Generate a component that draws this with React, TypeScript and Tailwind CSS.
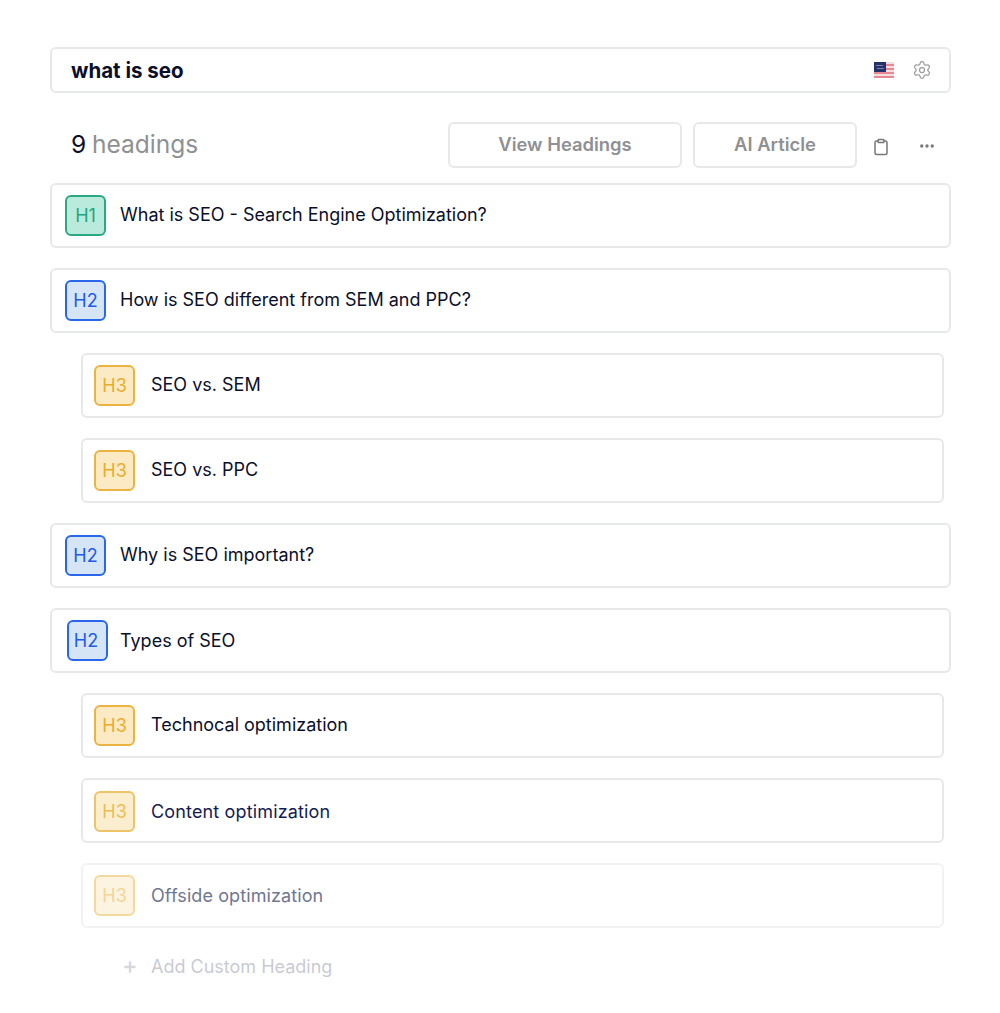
import React from 'react';
import { Settings, Clipboard, MoreHorizontal, Plus } from 'lucide-react';

type Level = 'H1' | 'H2' | 'H3';

interface HeadingRow {
  level: Level;
  title: string;
  badgeClass?: string;
  rowClass?: string;
  textClass?: string;
}

const badgeStyles: Record<Level, string> = {
  H1: 'bg-[#b9eadb] border-[#2aa883] text-[#1ea67f]',
  H2: 'bg-[#d5e5f5] border-[#2a66ea] text-[#1d5be8]',
  H3: 'bg-[#fbeac4] border-[#ebb440] text-[#e8ac2e]',
};

const rows: HeadingRow[] = [
  { level: 'H1', title: 'What is SEO - Search Engine Optimization?' },
  { level: 'H2', title: 'How is SEO different from SEM and PPC?' },
  { level: 'H3', title: 'SEO vs. SEM' },
  { level: 'H3', title: 'SEO vs. PPC' },
  { level: 'H2', title: 'Why is SEO important?' },
  { level: 'H2', title: 'Types of SEO', badgeClass: 'ml-[2px] mr-[12px] pr-[3px]', textClass: 'text-[#0b0f2b]' },
  { level: 'H3', title: 'Technocal optimization' },
  {
    level: 'H3',
    title: 'Content optimization',
    badgeClass: 'mr-[16px] mt-[2px] opacity-80',
    textClass: 'mt-[2px] tracking-[0.15px] text-[#161b52]',
  },
  {
    level: 'H3',
    title: 'Offside optimization',
    rowClass: 'border-[#f1f2f3]',
    badgeClass: 'mr-[16px] opacity-50',
    textClass: 'tracking-[0.1px] text-[#6f7792]',
  },
];

const Row: React.FC<{ row: HeadingRow }> = ({ row }) => {
  const nested = row.level === 'H3';
  return (
    <div
      className={`flex h-[65px] items-center rounded-md border-2 bg-white ${
        nested ? 'ml-[31px] mr-[7px] pl-[11px]' : 'pl-[13px]'
      } ${row.rowClass ?? 'border-[#e7e8ea]'}`}
    >
      <div
        className={`flex h-[41px] w-[41px] shrink-0 items-center justify-center rounded-md border-2 text-[18px] ${
          badgeStyles[row.level]
        } ${row.badgeClass ?? (nested ? 'mr-[16px]' : 'mr-[14px]')}`}
      >
        {row.level}
      </div>
      <span className={`text-[18px] ${row.textClass ?? 'mb-[2px] text-[#0b0f2b]'}`}>{row.title}</span>
    </div>
  );
};

const UsFlag = () => (
  <svg width="20" height="16" viewBox="0 0 20 16">
    <rect width="20" height="16" fill="#f7dcdd" />
    <rect y="2" width="20" height="2" fill="#e58a92" />
    <rect y="6" width="20" height="2" fill="#e58a92" />
    <rect y="10" width="20" height="2" fill="#e58a92" />
    <rect y="14" width="20" height="2" fill="#e58a92" />
    <rect width="12" height="10" fill="#26306b" />
    <rect x="2" y="3" width="7" height="1" fill="#7d83a8" />
    <rect x="3" y="6" width="7" height="1" fill="#7d83a8" />
  </svg>
);

const App: React.FC = () => {
  return (
    <div className="min-h-[1013px] w-[1000px] bg-white pl-[50px] pr-[49px] pt-[47px] font-['Inter',sans-serif]">
      <div className="flex h-[46px] items-center rounded-md border-2 border-[#e7e8ea] pl-[19px] pr-[17px]">
        <span className="mt-[2px] flex-1 text-[20.5px] font-bold text-[#0b0f2b]">what is seo</span>
        <UsFlag />
        <Settings className="ml-[18px] h-[20px] w-[20px] text-[#9b9b9b]" strokeWidth={1.5} />
      </div>

      <div className="mb-[15px] mt-[29px] flex h-[46px] items-center">
        <div className="mb-px flex-1 pl-[21px] text-[24.5px] text-[#8f9092] [word-spacing:-1px]">
          <span className="text-[#0b0f2b]">9</span> headings
        </div>
        <button className="h-[46px] w-[234px] rounded-md border-2 border-[#e7e8ea] pb-px text-[18.4px] font-semibold text-[#8f9092]">
          View Headings
        </button>
        <button className="ml-[11px] h-[46px] w-[164px] rounded-md border-2 border-[#e7e8ea] pb-px text-[18.4px] font-semibold text-[#8f9092]">
          AI Article
        </button>
        <Clipboard className="ml-[15px] mt-[4px] h-[18px] w-[18px] text-[#777]" strokeWidth={2} />
        <MoreHorizontal className="ml-[28px] mr-[15px] mt-[2px] h-[18px] w-[18px] text-[#777]" strokeWidth={2.5} />
      </div>

      <div className="flex flex-col gap-[20px]">
        {rows.map((row) => (
          <Row key={row.title} row={row} />
        ))}
      </div>

      <div className="ml-[71px] mt-[25px] flex items-center opacity-30">
        <Plus className="ml-px h-[16px] w-[16px] text-[#7b7f95]" strokeWidth={3.5} />
        <span className="ml-[13px] text-[18px] text-[#4b5170]">Add Custom Heading</span>
      </div>
    </div>
  );
};

export default App;
